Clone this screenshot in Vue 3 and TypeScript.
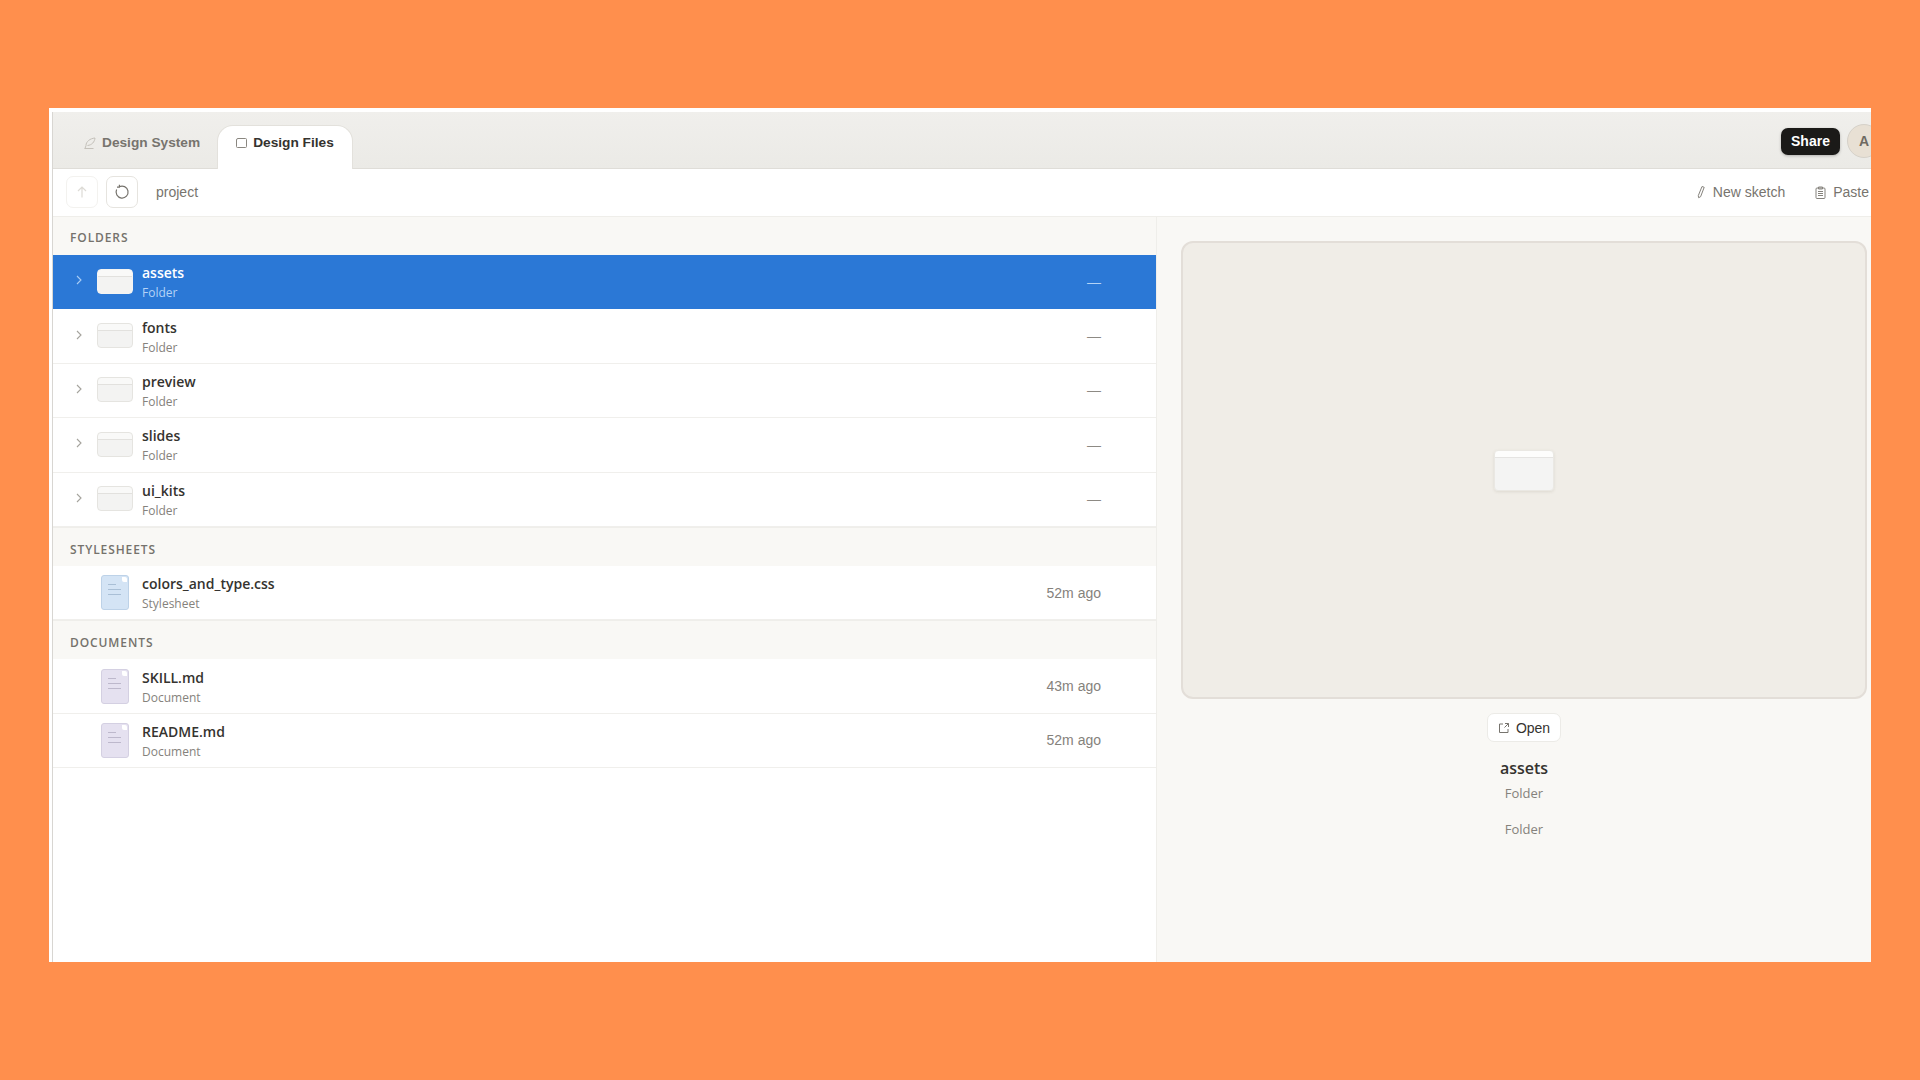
<script setup lang="ts">
interface Row {
  name: string;
  kind: string;
  meta: string;
  icon: "folder" | "css" | "doc";
  selected?: boolean;
}

interface Section {
  title: string;
  rows: Row[];
}

const sections: Section[] = [
  {
    title: "FOLDERS",
    rows: [
      { name: "assets", kind: "Folder", meta: "—", icon: "folder", selected: true },
      { name: "fonts", kind: "Folder", meta: "—", icon: "folder" },
      { name: "preview", kind: "Folder", meta: "—", icon: "folder" },
      { name: "slides", kind: "Folder", meta: "—", icon: "folder" },
      { name: "ui_kits", kind: "Folder", meta: "—", icon: "folder" },
    ],
  },
  {
    title: "STYLESHEETS",
    rows: [{ name: "colors_and_type.css", kind: "Stylesheet", meta: "52m ago", icon: "css" }],
  },
  {
    title: "DOCUMENTS",
    rows: [
      { name: "SKILL.md", kind: "Document", meta: "43m ago", icon: "doc" },
      { name: "README.md", kind: "Document", meta: "52m ago", icon: "doc" },
    ],
  },
];
</script>

<template>
  <div class="page">
    <div class="window">
      <div class="frame">
        <header class="tabbar">
          <div class="tab">
            <svg class="tab-icon" width="14" height="14" viewBox="0 0 14 14" fill="none" stroke="#c4c1ba" stroke-width="1">
              <path d="M3 9.5C3 5.5 7 2.5 12 2C11.5 6 9 9 4.5 9.5M1.5 12.5h9M3 9.5l-1 3" />
            </svg>
            <span>Design System</span>
          </div>
          <div class="tab active">
            <svg class="tab-icon" width="13" height="12" viewBox="0 0 13 12" fill="none" stroke="#8a8780" stroke-width="1">
              <path d="M1.5 3V9.5a1 1 0 0 0 1 1h8a1 1 0 0 0 1-1v-7a1 1 0 0 0-1-1H3A1.5 1.5 0 0 0 1.5 3Z" />
            </svg>
            <span>Design Files</span>
          </div>
          <div class="tabbar-right">
            <button class="share" type="button">Share</button>
            <div class="avatar">A</div>
          </div>
        </header>

        <div class="toolbar">
          <button class="tool-btn faint" type="button">
            <svg width="14" height="14" viewBox="0 0 14 14" fill="none" stroke="#dddbd6" stroke-width="1.2">
              <path d="M7 12.5V2M3 6l4-4 4 4" />
            </svg>
          </button>
          <button class="tool-btn" type="button">
            <svg width="16" height="16" viewBox="0 0 16 16" fill="none" stroke="#75726c" stroke-width="1.2">
              <path d="M5.2 2.8A6 6 0 1 1 2.6 5.6M5.4 0.8v2.4H3" />
            </svg>
          </button>
          <span class="crumb">project</span>
          <div class="tool-actions">
            <span class="action">
              <svg width="10" height="14" viewBox="0 0 10 14" fill="none" stroke="#85827c" stroke-width="1">
                <path d="M6 1.5l2.2.8-3.6 9.4-2 1-.3-2.1L6 1.5Z" />
              </svg>
              New sketch
            </span>
            <span class="action">
              <svg width="11" height="13" viewBox="0 0 11 13" fill="none" stroke="#85827c" stroke-width="1">
                <rect x="1" y="2" width="9" height="10.5" rx="1" />
                <path d="M3.5 1h4v2h-4zM3 5.5h5M3 7.5h5M3 9.5h5" />
              </svg>
              Paste
            </span>
          </div>
        </div>

        <div class="content">
          <main class="list">
            <section v-for="section in sections" :key="section.title">
              <h2 class="section-title">{{ section.title }}</h2>
              <div
                v-for="row in section.rows"
                :key="row.name"
                :class="['row', { selected: row.selected }]"
              >
                <span class="chevron-cell">
                  <svg v-if="row.icon === 'folder'" width="8" height="12" viewBox="0 0 8 12" fill="none" stroke="currentColor" stroke-width="1.1">
                    <path d="M2 2l4 4-4 4" />
                  </svg>
                </span>
                <span class="icon-cell">
                  <span v-if="row.icon === 'folder'" class="folder"></span>
                  <span v-else :class="['file', row.icon]">
                    <i></i><i></i><i></i>
                  </span>
                </span>
                <span class="labels">
                  <span class="name">{{ row.name }}</span>
                  <span class="kind">{{ row.kind }}</span>
                </span>
                <span :class="['meta', { dash: row.meta === '—' }]">{{ row.meta }}</span>
              </div>
            </section>
          </main>

          <aside class="details">
            <div class="preview">
              <span class="folder large"></span>
            </div>
            <button class="open" type="button">
              <svg width="12" height="12" viewBox="0 0 12 12" fill="none" stroke="#77746e" stroke-width="1">
                <path d="M5 2H1.5v8.5H10V7M7 1.5h3.5V5M10.5 1.5L6.5 5.5" />
              </svg>
              Open
            </button>
            <div class="detail-name">assets</div>
            <div class="detail-kind">Folder</div>
            <div class="detail-note">Folder</div>
          </aside>
        </div>
      </div>
    </div>
  </div>
</template>

<style>
html,
body {
  margin: 0;
  background: #ff8f4d;
}
</style>

<style scoped>
.page {
  width: 1920px;
  height: 1080px;
  padding: 108px 49px 118px;
  box-sizing: border-box;
  background: #ff8f4d;
  font-family: "Open Sans", "Liberation Sans", sans-serif;
}

.window {
  width: 1822px;
  height: 854px;
  display: flex;
  overflow: hidden;
  background: #fff;
  padding-top: 4px;
  padding-left: 3px;
  box-sizing: border-box;
}

.frame {
  flex: 1;
  min-width: 0;
  display: flex;
  flex-direction: column;
  border-left: 1px solid #d8d6d2;
}

.tabbar {
  height: 57px;
  flex: none;
  box-sizing: border-box;
  display: flex;
  align-items: flex-end;
  padding-left: 13px;
  gap: 1px;
  background: linear-gradient(#f0efec, #ebeae6);
  border-bottom: 1px solid #dfddd8;
  font-family: "Liberation Sans", Arial, sans-serif;
}

.tab {
  height: 43px;
  padding: 0 17px 10px;
  display: flex;
  align-items: center;
  gap: 5px;
  font-size: 13.7px;
  font-weight: 700;
  color: #77746e;
  white-space: nowrap;
  position: relative;
  top: 1px;
  box-sizing: border-box;
}

.tab-icon {
  flex: none;
}

.tab.active {
  width: 134px;
  background: #fff;
  color: #35332f;
  border-radius: 15px 15px 0 0;
  box-shadow: 0 0 0 1px #e3e1dc;
  clip-path: inset(-2px -2px 0 -2px);
}

.tabbar-right {
  margin-left: auto;
  align-self: center;
  display: flex;
  align-items: center;
  gap: 7px;
  margin-right: -10px;
  margin-top: 2px;
}

.share {
  width: 59px;
  height: 27px;
  border: 0;
  border-radius: 7px;
  background: #1b1a18;
  color: #fff;
  font: 700 14px "Liberation Sans", Arial, sans-serif;
  box-shadow: 0 1px 3px rgba(0, 0, 0, 0.25);
  padding: 0;
}

.avatar {
  width: 34px;
  height: 34px;
  box-sizing: border-box;
  flex: none;
  border-radius: 50%;
  background: #e8e0d4;
  border: 1px solid #d5d1c9;
  color: #6f6a62;
  font-size: 14px;
  font-weight: 700;
  display: flex;
  align-items: center;
  justify-content: center;
}

.toolbar {
  height: 48px;
  flex: none;
  box-sizing: border-box;
  display: flex;
  align-items: center;
  padding: 0 2px 1px 13px;
  gap: 8px;
  border-bottom: 1px solid #efeeea;
  font-family: "Liberation Sans", Arial, sans-serif;
  font-size: 14px;
  color: #77746e;
}

.tool-btn {
  width: 32px;
  height: 32px;
  padding: 0;
  display: flex;
  align-items: center;
  justify-content: center;
  background: #fff;
  border: 1px solid #e6e4df;
  border-radius: 7px;
}

.tool-btn.faint {
  border-color: #f3f2ef;
}

.crumb {
  margin-left: 10px;
}

.tool-actions {
  margin-left: auto;
  display: flex;
  gap: 30px;
  white-space: nowrap;
}

.action {
  display: flex;
  align-items: center;
  gap: 7px;
}

.content {
  flex: 1;
  display: flex;
  min-height: 0;
}

.list {
  width: 1104px;
  flex: none;
  box-sizing: border-box;
  border-right: 1px solid #efeeea;
}

.section-title {
  height: 38px;
  margin: 0;
  padding: 2px 17px 0;
  display: flex;
  align-items: center;
  box-sizing: border-box;
  background: #f9f8f5;
  font-size: 12px;
  font-weight: 600;
  letter-spacing: 0.9px;
  color: #75726c;
}

section + section .section-title {
  height: 39px;
  padding-top: 5px;
  border-top: 1px solid #efeeea;
}

.row {
  height: 54.4px;
  box-sizing: border-box;
  display: flex;
  align-items: center;
  border-bottom: 1px solid #f0efec;
  background: #fff;
  padding-right: 55px;
}

.row.selected {
  background: #2b78d6;
  border-bottom-color: #2b78d6;
}

.chevron-cell {
  width: 44px;
  padding-left: 22px;
  margin-top: -3px;
  box-sizing: border-box;
  flex: none;
  display: flex;
  color: #a5a39d;
}

.selected .chevron-cell {
  color: #a9cdf5;
}

.icon-cell {
  width: 36px;
  flex: none;
  display: flex;
  justify-content: center;
}

.folder {
  width: 36px;
  height: 25px;
  margin-top: -1px;
  box-sizing: border-box;
  display: block;
  background: linear-gradient(#f9f9f8 0 6px, #e2e1de 6px 7px, #f3f3f2 7px);
  border: 1px solid #e5e4e0;
  border-radius: 4px;
}

.selected .folder {
  background: linear-gradient(#f9f9f8 0 6px, #e2e1de 6px 7px, #f3f3f2 7px);
  border-color: #f4f4f3;
}

.folder.large {
  width: 60px;
  height: 41px;
  margin-top: 0;
  border-color: #eae8e3;
  box-shadow: 0 1px 3px rgba(90, 80, 60, 0.12);
  background: linear-gradient(#fdfdfc 0 6px, #e5e4e2 6px 7px, #f4f4f3 7px);
}

.file {
  width: 28px;
  height: 35px;
  box-sizing: border-box;
  display: flex;
  flex-direction: column;
  gap: 4px;
  padding: 8px 6px 0;
  border-radius: 3px;
  position: relative;
}

.file::after {
  content: "";
  position: absolute;
  top: 1px;
  right: 1px;
  width: 5px;
  height: 5px;
  background: #fff;
  border-radius: 0 2px 0 2px;
}

.file i {
  display: block;
  height: 1px;
  width: 13px;
}

.file i:first-child {
  width: 8px;
}

.file.css {
  background: #d4e4f5;
  border: 1px solid #bdd2e8;
}

.file.css i {
  background: #a9bfd6;
}

.file.doc {
  background: #e5e1f0;
  border: 1px solid #d4d0e2;
}

.file.doc i {
  background: #bdb8cc;
}

.labels {
  margin-left: 9px;
  padding-top: 1px;
  display: flex;
  flex-direction: column;
}

.name {
  font-size: 14px;
  line-height: 19px;
  font-weight: 600;
  color: #35332f;
}

.kind {
  margin-top: 2px;
  font-size: 12px;
  line-height: 17px;
  color: #85827c;
}

.selected .name {
  color: #fff;
}

.selected .kind {
  color: #b4d3f6;
}

.meta {
  margin-left: auto;
  font-family: "Liberation Sans", Arial, sans-serif;
  font-size: 14px;
  color: #85827c;
}

.meta.dash {
  color: #8d8a84;
}

.selected .meta {
  color: #b4d3f6;
}

.details {
  flex: 1;
  min-width: 0;
  box-sizing: border-box;
  padding: 24px 4px 0 24px;
  background: #f9f8f5;
  display: flex;
  flex-direction: column;
  align-items: center;
  text-align: center;
}

.preview {
  width: 100%;
  height: 458px;
  box-sizing: border-box;
  display: flex;
  align-items: center;
  justify-content: center;
  background: #f0ede7;
  border: 2px solid #e3ded8;
  border-radius: 12px;
}

.open {
  height: 29px;
  width: 74px;
  margin-top: 14px;
  padding: 0;
  display: flex;
  align-items: center;
  justify-content: center;
  gap: 6px;
  background: #fff;
  border: 1px solid #ecebe7;
  border-radius: 7px;
  color: #35332f;
  font: 14px "Liberation Sans", Arial, sans-serif;
}

.detail-name {
  margin-top: 15px;
  font-size: 16px;
  line-height: 22px;
  font-weight: 600;
  color: #35332f;
}

.detail-kind {
  margin-top: 5px;
  font-size: 13px;
  line-height: 18px;
  color: #85827c;
}

.detail-note {
  margin-top: 18px;
  font-size: 13px;
  line-height: 18px;
  color: #85827c;
}
</style>
